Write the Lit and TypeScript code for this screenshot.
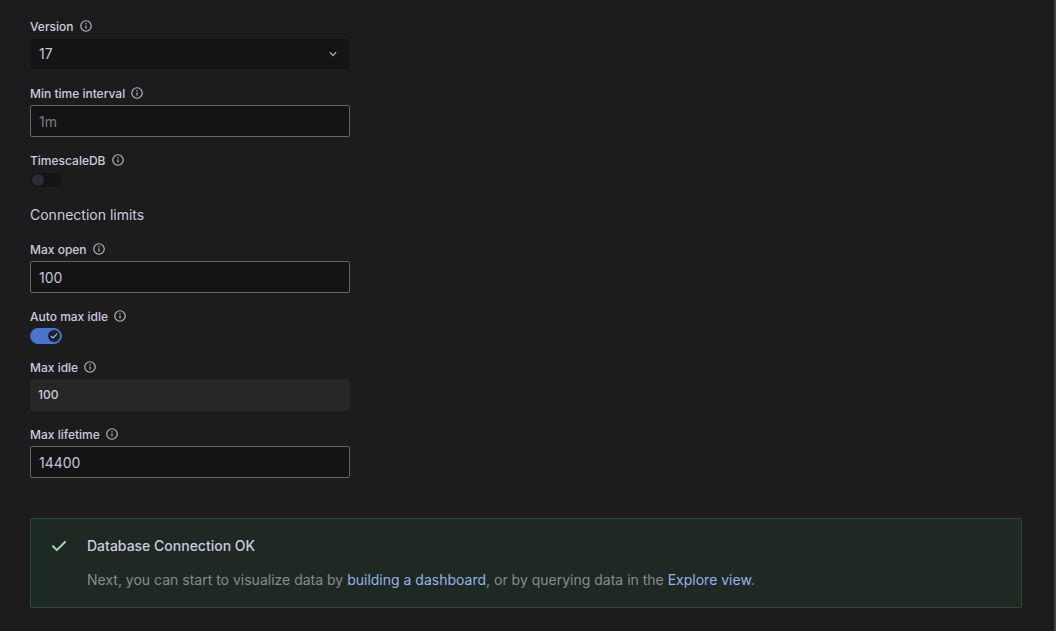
import { LitElement, html, css, svg } from "lit";
import { customElement, property } from "lit/decorators.js";

const infoIcon = html`<svg class="info" viewBox="0 0 24 24" width="14" height="14" aria-hidden="true">
  ${svg`<path fill="currentColor" d="M12,2A10,10,0,1,0,22,12,10.01114,10.01114,0,0,0,12,2Zm0,18a8,8,0,1,1,8-8A8.00917,8.00917,0,0,1,12,20Zm0-9.5a1,1,0,0,0-1,1v4a1,1,0,0,0,2,0v-4A1,1,0,0,0,12,10.5Zm0-3.5a1.25,1.25,0,1,0,1.25,1.25A1.25,1.25,0,0,0,12,7Z"/>`}
</svg>`;

const checkPath = svg`<path fill="currentColor" d="M18.71,7.21a1,1,0,0,0-1.42,0L9.84,14.67,6.71,11.53A1,1,0,1,0,5.29,13l3.84,3.84a1,1,0,0,0,1.42,0l8.16-8.16A1,1,0,0,0,18.71,7.21Z"/>`;

@customElement("form-field")
class FormField extends LitElement {
  static styles = css`
    :host {
      display: block;
    }
    .label {
      display: flex;
      align-items: flex-start;
      gap: 5px;
      margin-bottom: 4px;
      font-size: 12px;
      font-weight: 500;
      line-height: 15px;
    }
    .info {
      display: block;
      color: #b9b9c7;
    }
    .control {
      box-sizing: border-box;
      display: block;
      width: 100%;
      height: 32px;
      margin: 0;
      padding: 0 8px;
      border: 1px solid #646466;
      border-radius: 2px;
      outline: none;
      background: #141414;
      color: #c4c4d3;
      font: inherit;
    }
    .control::placeholder {
      color: #7b7b83;
      opacity: 1;
    }
    .control:disabled {
      padding: 0 7px 2px;
      border-color: #262626;
      background: #262626;
      color: #ccccdc;
      font-size: 12px;
      font-weight: 500;
    }
    .select-box {
      display: grid;
      align-items: center;
    }
    .select-box > * {
      grid-area: 1 / 1;
    }
    .select {
      appearance: none;
      border-color: #1c1c1c;
    }
    .arrow {
      justify-self: end;
      margin-right: 9px;
      pointer-events: none;
      color: #a4a4ae;
    }
    .switch {
      display: grid;
      width: 32px;
      height: 16px;
    }
    .switch > * {
      grid-area: 1 / 1;
    }
    .toggle {
      margin: 0;
      width: 32px;
      height: 16px;
      opacity: 0;
      z-index: 1;
      cursor: pointer;
    }
    .track {
      box-sizing: border-box;
      display: flex;
      align-items: center;
      padding: 0 1px;
      border: 1px solid #1c1c1c;
      border-radius: 8px;
      background: #141414;
    }
    .knob {
      display: flex;
      align-items: center;
      justify-content: center;
      width: 12px;
      height: 12px;
      border-radius: 50%;
      background: #2e2b3b;
    }
    .knob svg {
      display: none;
    }
    .toggle:checked + .track {
      justify-content: flex-end;
      border-color: #4775d1;
      background: #4775d1;
    }
    .toggle:checked + .track .knob {
      background: #1c1f26;
      color: #b4c6ee;
    }
    .toggle:checked + .track .knob svg {
      display: block;
    }
  `;

  @property() label = "";
  @property() kind = "text";
  @property() value = "";
  @property() placeholder = "";
  @property({ type: Boolean }) disabled = false;
  @property({ type: Boolean }) checked = false;

  private renderControl() {
    if (this.kind === "select") {
      return html`<div class="select-box">
        <select class="control select" id="control">
          <option selected>${this.value}</option>
        </select>
        <svg class="arrow" viewBox="0 0 24 24" width="16" height="16" aria-hidden="true">
          <path fill="currentColor" d="M17,9.17a1,1,0,0,0-1.41,0L12,12.71,8.46,9.17a1,1,0,0,0-1.41,0,1,1,0,0,0,0,1.42l4.24,4.24a1,1,0,0,0,1.42,0L17,10.59A1,1,0,0,0,17,9.17Z"/>
        </svg>
      </div>`;
    }
    if (this.kind === "switch") {
      return html`<div class="switch">
        <input class="toggle" id="control" type="checkbox" role="switch" .checked=${this.checked} />
        <span class="track"
          ><span class="knob"
            ><svg viewBox="0 0 24 24" width="12" height="12" aria-hidden="true">${checkPath}</svg></span
          ></span
        >
      </div>`;
    }
    return html`<input
      class="control"
      id="control"
      type="text"
      .value=${this.value}
      placeholder=${this.placeholder}
      ?disabled=${this.disabled}
    />`;
  }

  render() {
    return html`<label class="label" for="control">${this.label}${infoIcon}</label>${this.renderControl()}`;
  }
}

@customElement("status-alert")
class StatusAlert extends LitElement {
  static styles = css`
    :host {
      display: flex;
      align-items: flex-start;
      gap: 16px;
      padding: 15px 16px 17px;
      border: 1px solid #244b34;
      border-radius: 2px;
      background: #1e2924;
    }
    .check {
      flex: none;
      color: #97dfb0;
    }
    .title {
      margin: 0;
      font-size: 14px;
      font-weight: 500;
      line-height: 24px;
    }
    .text {
      margin: 12px 0 0;
      font-size: 14px;
      line-height: 20px;
      color: #868c8b;
    }
    .link {
      color: #98b2ea;
      text-decoration: none;
    }
  `;

  render() {
    return html`
      <svg class="check" viewBox="0 0 24 24" width="24" height="24" aria-hidden="true">${checkPath}</svg>
      <div>
        <p class="title">Database Connection OK</p>
        <p class="text">
          Next, you can start to visualize data by <a class="link" href="#dashboard">building a dashboard</a>, or by
          querying data in the <a class="link" href="#explore">Explore view</a>.
        </p>
      </div>
    `;
  }
}

@customElement("app-root")
class AppRoot extends LitElement {
  static styles = css`
    :host {
      box-sizing: border-box;
      display: block;
      min-height: 100vh;
      padding: 19px 32px 23px 30px;
      border-right: 2px solid #3e4144;
      background: #1c1c1c;
      color: #ccccdc;
      font: 14px/22px Inter, "Liberation Sans", sans-serif;
    }
    .form {
      display: grid;
      gap: 16px;
      max-width: 320px;
      margin-bottom: 40px;
    }
    .heading {
      margin: 0;
      font-size: 14px;
      font-weight: 400;
      line-height: 22px;
    }
  `;

  render() {
    return html`
      <form class="form">
        <form-field label="Version" kind="select" value="17"></form-field>
        <form-field label="Min time interval" placeholder="1m"></form-field>
        <form-field label="TimescaleDB" kind="switch"></form-field>
        <h2 class="heading">Connection limits</h2>
        <form-field label="Max open" value="100"></form-field>
        <form-field label="Auto max idle" kind="switch" checked></form-field>
        <form-field label="Max idle" value="100" disabled></form-field>
        <form-field label="Max lifetime" value="14400"></form-field>
      </form>
      <status-alert role="status"></status-alert>
    `;
  }
}
